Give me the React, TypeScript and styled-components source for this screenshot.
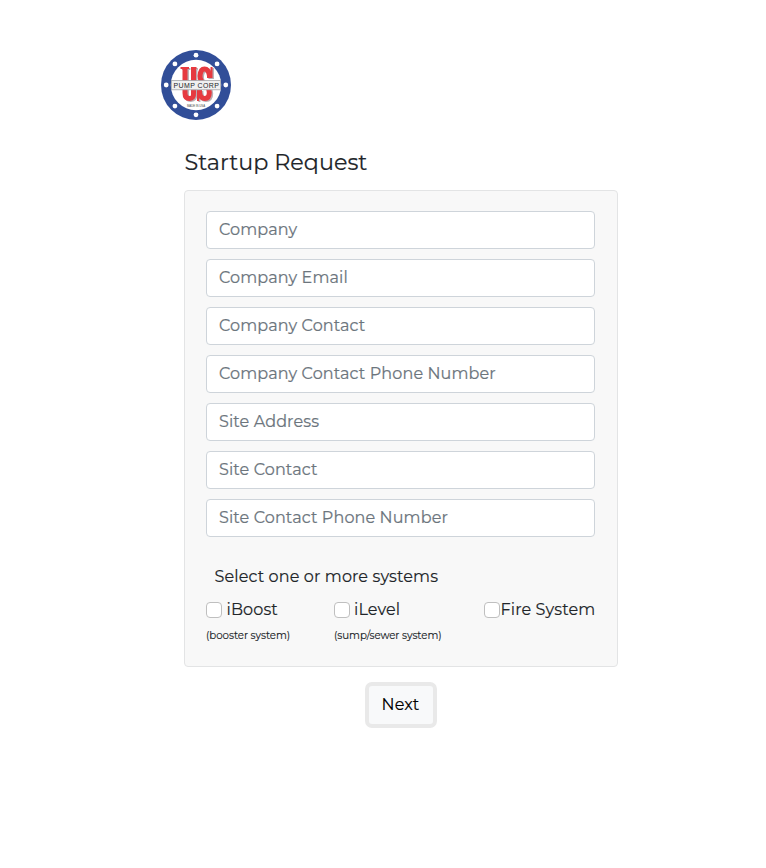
import React from "react";
import styled, { createGlobalStyle } from "styled-components";

const GlobalStyle = createGlobalStyle`
  *, *::before, *::after { box-sizing: border-box; }
  body {
    margin: 0;
    background: #fff;
    color: #212529;
    font-family: Montserrat, Inter, sans-serif;
    font-size: 16px;
    font-weight: 400;
    letter-spacing: 0.12px;
    line-height: 24px;
    -webkit-text-stroke: 0.15px;
  }
`;

const Page = styled.main`
  width: 434px;
  margin-left: 184px;
  padding-top: 50px;
`;

const Logo = styled.svg`
  display: block;
  width: 70px;
  height: 70px;
  margin-left: -23px;
  -webkit-text-stroke: 0;
`;

const Title = styled.h1`
  margin: 28px 0 14px 0.5px;
  font-size: 22.3px;
  font-weight: 400;
  letter-spacing: 0;
  line-height: 28px;
`;

const Card = styled.section`
  height: 477px;
  padding: 20px 22px 0 21px;
  border: 1px solid #e3e4e5;
  border-radius: 4px;
  background: #f8f8f8;
`;

const Fields = styled.div`
  display: grid;
  gap: 10px;
`;

const Field = styled.input`
  width: 100%;
  height: 38px;
  padding: 5px 12px 7px;
  border: 1px solid #ced4da;
  border-radius: 4px;
  background: #fff;
  font: inherit;
  letter-spacing: inherit;
  &::placeholder { color: #6c757d; opacity: 1; -webkit-text-stroke: 0.2px #6c757d; }
`;

const Prompt = styled.p`
  margin: 28px 0 9px 8.5px;
`;

const Systems = styled.div`
  display: flex;
`;

const System = styled.div<{ $width: number }>`
  width: ${(p) => p.$width}px;
  white-space: nowrap;
`;

const CheckLabel = styled.label<{ $gap: number }>`
  display: flex;
  align-items: center;
  height: 24px;
  gap: ${(p) => p.$gap}px;
`;

const Checkbox = styled.input`
  appearance: none;
  flex: none;
  width: 16px;
  height: 16px;
  margin: 0;
  border: 1px solid #bfbfbf;
  border-radius: 4px;
  background: #fff;
`;

const Note = styled.small`
  display: block;
  margin-top: 6px;
  font-size: 10.25px;
  letter-spacing: -0.06px;
  line-height: 16px;
`;

const NextButton = styled.button`
  display: block;
  width: 72px;
  height: 46px;
  margin: 15px auto 0;
  padding: 0 1px 0 0;
  border: 4px solid #e9e9e9;
  border-radius: 7px;
  background: #f8f9fa;
  color: #000;
  font: inherit;
  letter-spacing: inherit;
`;

const fields = [
  "Company",
  "Company Email",
  "Company Contact",
  "Company Contact Phone Number",
  "Site Address",
  "Site Contact",
  "Site Contact Phone Number",
];

const systems = [
  { label: "iBoost", note: "(booster system)", width: 128, gap: 4.5 },
  { label: "iLevel", note: "(sump/sewer system)", width: 150, gap: 4 },
  { label: "Fire System", note: "", width: 111, gap: 0.5 },
];

const bolts = Array.from({ length: 8 }, (_, i) => (i * Math.PI) / 4);

const letterU = "M24 19V43Q24 48.5 28.5 48.5T32.5 43V19";
const letterS = "M48.5 28V26Q47.5 19 43.5 19T39 26Q39 31 43.5 34T48.3 42.5Q48.3 48.5 43.5 48.5T38.5 41V40";
const serifs = "M19.5 18H28M30 18H35.5M50.5 17V28M37 40V51";

function CompanyLogo() {
  return (
    <Logo viewBox="0 0 70 70" role="img" aria-label="US Pump Corp">
      <circle cx="35" cy="35" r="35" fill="#314e98" />
      <circle cx="35" cy="35" r="25.2" fill="#fff" />
      {bolts.map((a) => (
        <circle key={a} cx={35 + 29.8 * Math.cos(a)} cy={35 + 29.8 * Math.sin(a)} r="2.4" fill="#fff" />
      ))}
      <g fill="none">
        <g stroke="#b9adb2" transform="translate(1.4 1)">
          <path d={letterU} strokeWidth="5" />
          <path d={letterS} strokeWidth="5" />
          <path d={serifs} strokeWidth="2" />
        </g>
        <g stroke="#e63a40">
          <path d={letterU} strokeWidth="5" />
          <path d={letterS} strokeWidth="5" />
          <path d={serifs} strokeWidth="2" />
        </g>
      </g>
      <rect x="10.5" y="30.5" width="49" height="9.3" fill="#f0f0f1" stroke="#a5a6aa" strokeWidth="0.8" />
      <text x="12.5" y="37.6" textLength="45.5" letterSpacing="0" fontFamily="Liberation Sans, sans-serif" fontSize="7" fill="#26262a">PUMP CORP</text>
      <text x="26" y="57.2" textLength="18" letterSpacing="0" lengthAdjust="spacingAndGlyphs" fontFamily="Liberation Sans, sans-serif" fontSize="3.2" fill="#444">MADE IN USA</text>
    </Logo>
  );
}

export default function App() {
  return (
    <>
      <GlobalStyle />
      <Page>
        <CompanyLogo />
        <Title>Startup Request</Title>
        <Card>
          <Fields>
            {fields.map((label) => (
              <Field key={label} placeholder={label} />
            ))}
          </Fields>
          <Prompt>Select one or more systems</Prompt>
          <Systems>
            {systems.map((s) => (
              <System key={s.label} $width={s.width}>
                <CheckLabel $gap={s.gap}>
                  <Checkbox type="checkbox" />
                  {s.label}
                </CheckLabel>
                {s.note && <Note>{s.note}</Note>}
              </System>
            ))}
          </Systems>
        </Card>
        <NextButton type="button">Next</NextButton>
      </Page>
    </>
  );
}
